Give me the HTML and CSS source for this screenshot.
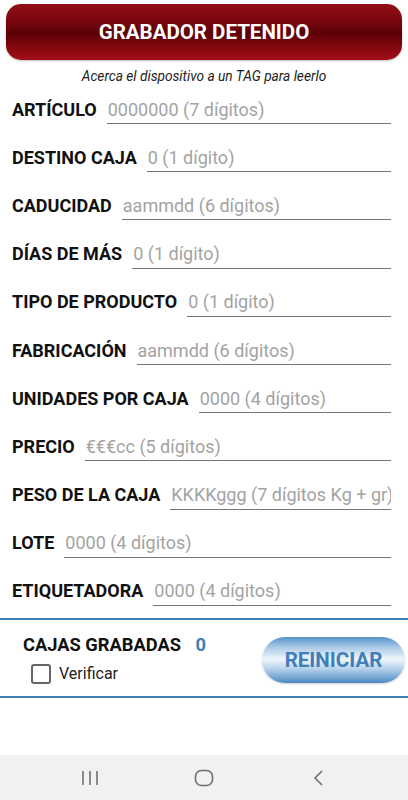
FILE: index.html
```html
<!DOCTYPE html>
<html lang="es">
<head>
    <meta charset="UTF-8">
    <meta name="viewport" content="width=device-width, initial-scale=1.0">
    <title>Grabador</title>
    <link rel="stylesheet" href="styles.css">
</head>
<body>
    <div class="screen">
        <div class="status">GRABADOR DETENIDO</div>
        <p class="hint">Acerca el dispositivo a un TAG para leerlo</p>

        <div class="form">
            <div class="row"><label>ARTÍCULO</label><input type="text" placeholder="0000000 (7 dígitos)"></div>
            <div class="row"><label>DESTINO CAJA</label><input type="text" placeholder="0 (1 dígito)"></div>
            <div class="row"><label>CADUCIDAD</label><input type="text" placeholder="aammdd (6 dígitos)"></div>
            <div class="row"><label>DÍAS DE MÁS</label><input type="text" placeholder="0 (1 dígito)"></div>
            <div class="row"><label>TIPO DE PRODUCTO</label><input type="text" placeholder="0 (1 dígito)"></div>
            <div class="row"><label>FABRICACIÓN</label><input type="text" placeholder="aammdd (6 dígitos)"></div>
            <div class="row"><label>UNIDADES POR CAJA</label><input type="text" placeholder="0000 (4 dígitos)"></div>
            <div class="row"><label>PRECIO</label><input type="text" placeholder="€€€cc (5 dígitos)"></div>
            <div class="row"><label>PESO DE LA CAJA</label><input type="text" placeholder="KKKKggg (7 dígitos Kg + gr)"></div>
            <div class="row"><label>LOTE</label><input type="text" placeholder="0000 (4 dígitos)"></div>
            <div class="row"><label>ETIQUETADORA</label><input type="text" placeholder="0000 (4 dígitos)"></div>
        </div>

        <div class="footer">
            <div class="counter">
                <div class="count-line">CAJAS GRABADAS <span class="count">0</span></div>
                <div class="check"><span class="box"></span>Verificar</div>
            </div>
            <button class="reset">REINICIAR</button>
        </div>

        <div class="navbar">
            <svg width="18" height="16" viewBox="0 0 18 16"><path d="M2 1v14M9 1v14M16 1v14" stroke="#707070" stroke-width="1.6" fill="none"/></svg>
            <svg width="20" height="18" viewBox="0 0 20 18"><rect x="1.5" y="1.5" width="17" height="15" rx="6" stroke="#707070" stroke-width="1.6" fill="none"/></svg>
            <svg width="12" height="16" viewBox="0 0 12 16"><path d="M10 1L3 8l7 7" stroke="#707070" stroke-width="1.6" fill="none"/></svg>
        </div>
    </div>
</body>
</html>
```

FILE: styles.css
```css
body {
    margin: 0;
    font-family: Roboto, 'Noto Sans', sans-serif;
    background: #fff;
    color: #111;
}

.screen {
    min-height: 100vh;
    display: flex;
    flex-direction: column;
}

.status {
    margin: 4px 6px 0;
    height: 56px;
    border-radius: 15px;
    background: linear-gradient(to bottom, #930d16 0%, #7a0610 30%, #5c0207 52%, #85080f 78%, #a00e18 100%);
    color: #fff;
    font-weight: bold;
    font-size: 20.5px;
    display: flex;
    align-items: center;
    justify-content: center;
    box-shadow: 0 1px 2px rgba(0, 0, 0, 0.25);
}

.hint {
    margin: 0;
    padding-top: 8px;
    height: 17px;
    line-height: 16px;
    font-size: 13.7px;
    font-style: italic;
    text-align: center;
    color: #222;
}

.form {
    display: flex;
    flex-direction: column;
}

.row {
    height: 48.2px;
    display: flex;
    align-items: center;
    padding: 0 17px 0 12px;
}

.row label {
    font-weight: bold;
    font-size: 18px;
    white-space: nowrap;
    margin-right: 10px;
    color: #111;
}

.row input {
    flex: 1;
    min-width: 0;
    height: 28px;
    border: none;
    border-bottom: 1px solid #777;
    padding: 0 0 0 1px;
    font-family: Roboto, sans-serif;
    font-size: 18px;
    outline: none;
    background: transparent;
    margin-top: 1px;
}

.row input::placeholder {
    color: #a3a3a3;
}

.footer {
    margin-top: 3px;
    border-top: 2px solid #3f7fb1;
    border-bottom: 2px solid #3f7fb1;
    height: 76px;
    display: flex;
    align-items: center;
    justify-content: space-between;
    padding: 0 3px 0 23px;
}

.counter {
    display: flex;
    flex-direction: column;
    gap: 9px;
    margin-top: 1px;
}

.count-line {
    font-weight: bold;
    font-size: 18.3px;
}

.count {
    color: #3d7fb6;
    margin-left: 10px;
}

.check {
    display: flex;
    align-items: center;
    font-size: 16px;
    color: #222;
    padding-left: 8px;
}

.box {
    width: 16px;
    height: 16px;
    border: 2px solid #666;
    border-radius: 3px;
    margin-right: 8px;
}

.reset {
    width: 143px;
    height: 46px;
    border: none;
    border-radius: 23px;
    background: linear-gradient(to bottom, #5592c9 0%, #a9c9e6 22%, #eef5fb 48%, #b3d0ea 70%, #4a89c3 100%);
    color: #3f7eb8;
    font-family: Roboto, sans-serif;
    font-weight: bold;
    font-size: 20.5px;
    margin-top: 3px;
    box-shadow: 0 1px 2px rgba(0, 0, 0, 0.2);
}

.navbar {
    margin-top: auto;
    height: 45px;
    background: #f1f1f1;
    display: grid;
    grid-template-columns: repeat(3, 114px);
    justify-content: center;
    justify-items: center;
    align-items: center;
}
```
